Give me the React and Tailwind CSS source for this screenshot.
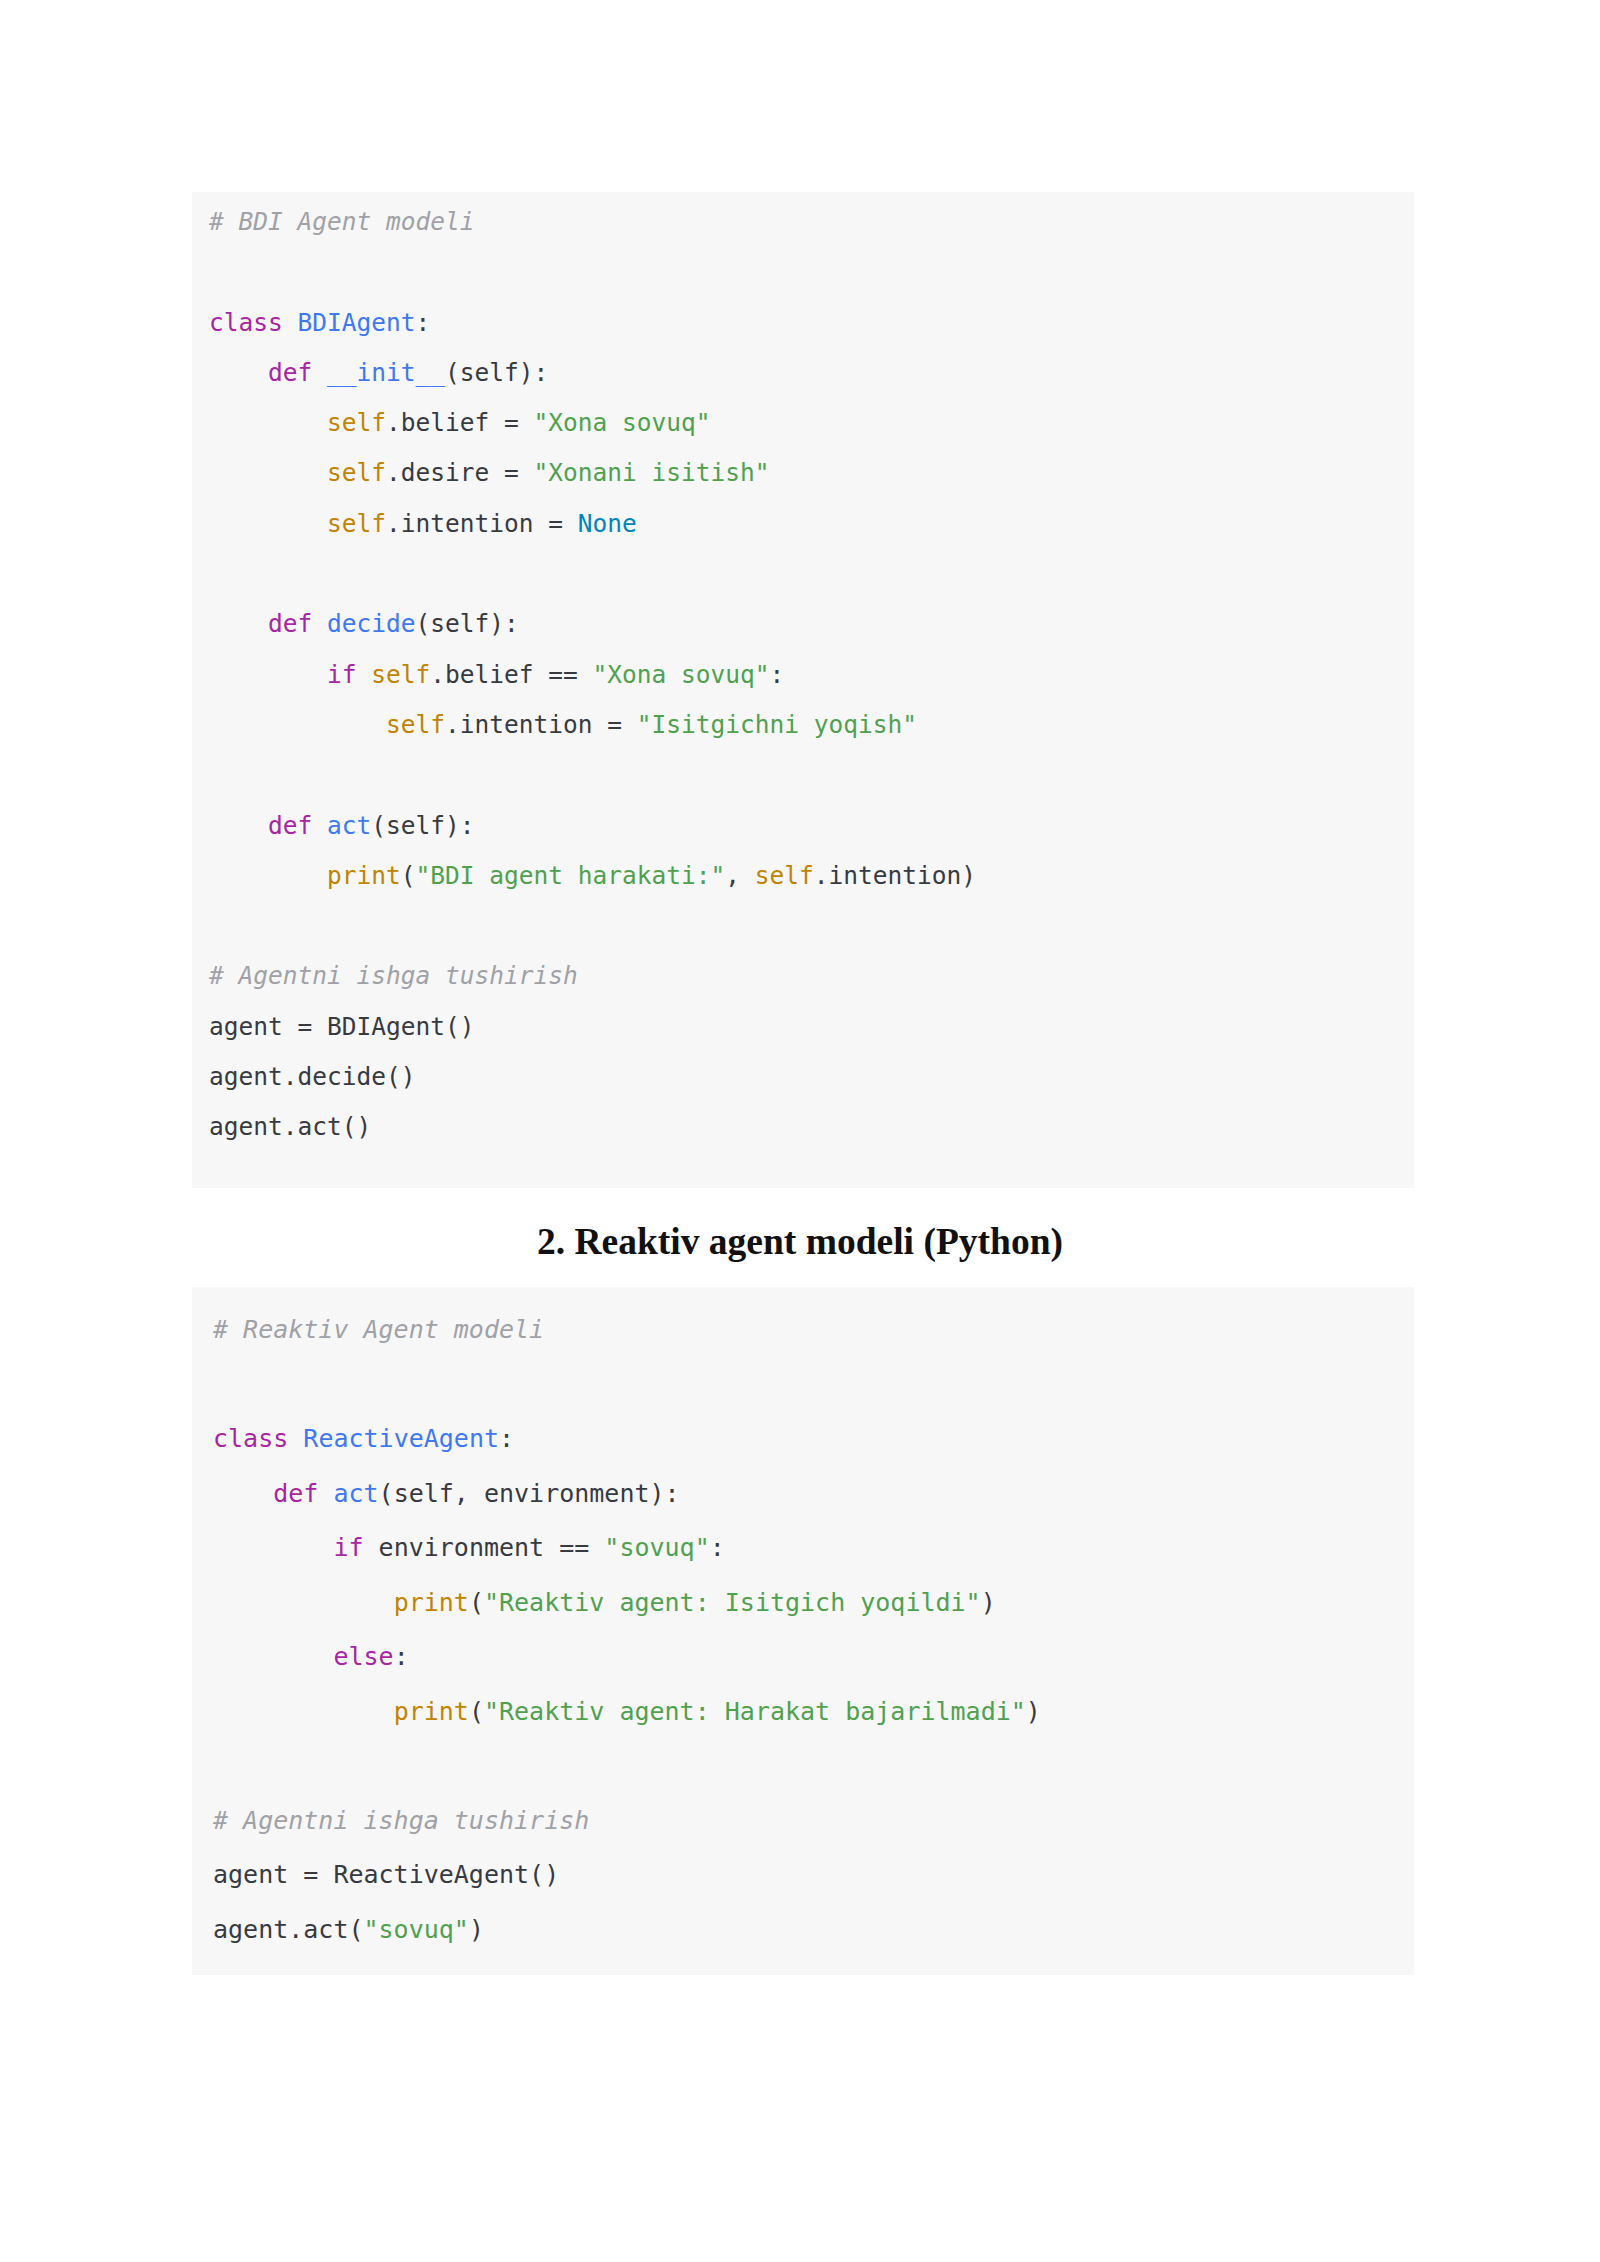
import React from 'react'

// atom-one-light token colours
const K = 'text-[#a626a4]'
const T = 'text-[#4078f2]'
const S = 'text-[#50a14f]'
const B = 'text-[#c18401]'
const N = 'text-[#0184bc]'
const C = 'text-[#a0a1a7] italic'
const D = ''

const bdiLines = [
  [['# BDI Agent modeli', C]],
  [],
  [['class', K], [' ', D], ['BDIAgent', T], [':', D]],
  [['    ', D], ['def', K], [' ', D], ['__init__', T], ['(self):', D]],
  [['        ', D], ['self', B], ['.belief = ', D], ['"Xona sovuq"', S]],
  [['        ', D], ['self', B], ['.desire = ', D], ['"Xonani isitish"', S]],
  [['        ', D], ['self', B], ['.intention = ', D], ['None', N]],
  [],
  [['    ', D], ['def', K], [' ', D], ['decide', T], ['(self):', D]],
  [['        ', D], ['if', K], [' ', D], ['self', B], ['.belief == ', D], ['"Xona sovuq"', S], [':', D]],
  [['            ', D], ['self', B], ['.intention = ', D], ['"Isitgichni yoqish"', S]],
  [],
  [['    ', D], ['def', K], [' ', D], ['act', T], ['(self):', D]],
  [['        ', D], ['print', B], ['(', D], ['"BDI agent harakati:"', S], [', ', D], ['self', B], ['.intention)', D]],
  [],
  [['# Agentni ishga tushirish', C]],
  [['agent = BDIAgent()', D]],
  [['agent.decide()', D]],
  [['agent.act()', D]],
]

const reactiveLines = [
  [['# Reaktiv Agent modeli', C]],
  [],
  [['class', K], [' ', D], ['ReactiveAgent', T], [':', D]],
  [['    ', D], ['def', K], [' ', D], ['act', T], ['(self, environment):', D]],
  [['        ', D], ['if', K], [' environment == ', D], ['"sovuq"', S], [':', D]],
  [['            ', D], ['print', B], ['(', D], ['"Reaktiv agent: Isitgich yoqildi"', S], [')', D]],
  [['        ', D], ['else', K], [':', D]],
  [['            ', D], ['print', B], ['(', D], ['"Reaktiv agent: Harakat bajarilmadi"', S], [')', D]],
  [],
  [['# Agentni ishga tushirish', C]],
  [['agent = ReactiveAgent()', D]],
  [['agent.act(', D], ['"sovuq"', S], [')', D]],
]

function CodeBlock({ lines, className, lineClass }) {
  return (
    <div
      className={`bg-[#f7f7f8] font-['DejaVu_Sans_Mono',monospace] text-[#383a42] ${className}`}
    >
      {lines.map((tokens, i) => (
        <div key={i} className={`whitespace-pre ${lineClass}`}>
          {tokens.length === 0
            ? '\u00a0'
            : tokens.map(([text, cls], j) => (
                <span key={j} className={cls}>
                  {text}
                </span>
              ))}
        </div>
      ))}
    </div>
  )
}

export default function App() {
  return (
    <div className="min-h-[2262px] bg-white pt-[192px]">
      <div className="ml-[192px] w-[1222px]">
        <CodeBlock
          lines={bdiLines}
          className="h-[996px] pl-[17px] pt-[5px] text-[24.5px]"
          lineClass="leading-[50.3px] h-[50.3px]"
        />

        <h2 className="h-[99px] pt-[9px] pr-[6px] flex items-center justify-center font-['Liberation_Serif',serif] font-bold text-[37.5px] text-[#111111]">
          2. Reaktiv agent modeli (Python)
        </h2>

        <CodeBlock
          lines={reactiveLines}
          className="h-[688px] pl-[21px] pt-[16px] text-[25px]"
          lineClass="leading-[54.5px] h-[54.5px]"
        />
      </div>
    </div>
  )
}
